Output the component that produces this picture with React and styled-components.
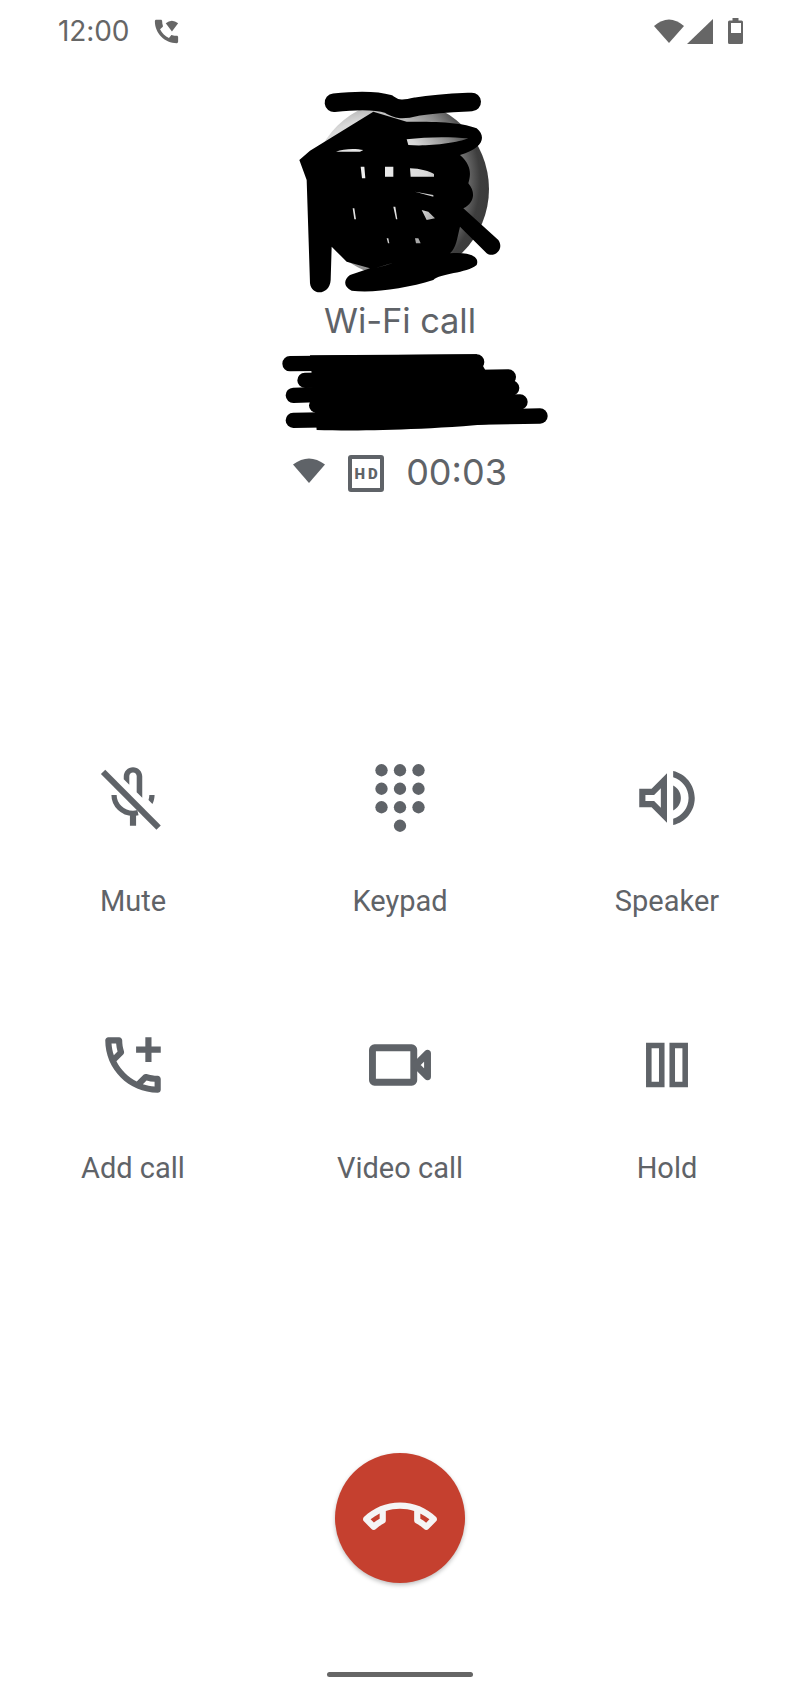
import React from "react";
import styled, { createGlobalStyle } from "styled-components";

const GlobalStyle = createGlobalStyle`
  html, body {
    margin: 0;
    padding: 0;
    background: #ffffff;
  }
`;

const Page = styled.div`
  width: 800px;
  height: 1689px;
  overflow: hidden;
  display: flex;
  flex-direction: column;
  align-items: center;
  background: #ffffff;
  color: #5f6368;
  font-family: "Roboto", "Liberation Sans", sans-serif;
`;

const StatusBar = styled.div`
  width: 100%;
  height: 66px;
  box-sizing: border-box;
  padding: 18px 57px 0 58px;
  display: flex;
  justify-content: space-between;
  align-items: flex-start;
  color: #666666;
`;

const StatusLeft = styled.div`
  display: flex;
  align-items: center;
  height: 26px;
  gap: 22px;
`;

const Clock = styled.span`
  font-family: "Inter", sans-serif;
  font-size: 28px;
  line-height: 30px;
  letter-spacing: -0.1px;
`;

const StatusRight = styled.div`
  display: flex;
  align-items: flex-start;
`;

const StatusIcon = styled.svg`
  display: block;
  flex: none;
  fill: currentColor;
  margin-left: ${(p) => p.$gap || 0}px;
`;

const AvatarWrap = styled.div`
  position: relative;
  width: 300px;
  height: 218px;
  margin-top: 14px;
`;

const AvatarCircle = styled.div`
  width: 178px;
  height: 178px;
  margin: 20px auto 0;
  border-radius: 50%;
  background: radial-gradient(circle at 32% 45%, #f2f2f2 0, #d9d9d9 38%, #8a8a8a 58%, #3e3e3e 72%, #333333 100%);
`;

const Scribble = styled.svg`
  position: absolute;
  top: 0;
  left: 10px;
  display: block;
`;

const CallType = styled.div`
  font-family: "Inter", sans-serif;
  font-size: 34.5px;
  line-height: 46px;
  letter-spacing: -0.1px;
  height: 44px;
`;

const Redaction = styled.svg`
  display: block;
  margin: 10px 0 0 20px;
`;

const TimerRow = styled.div`
  display: flex;
  align-items: center;
  height: 37px;
  margin-top: 23px;
`;

const TimerWifi = styled.svg`
  display: block;
  margin-bottom: 7px;
  fill: #5f6368;
`;

const HdBadge = styled.div`
  width: 36px;
  height: 37px;
  box-sizing: border-box;
  margin: 0 22px 0 23px;
  border: 4px solid #5f6368;
  border-radius: 3px;
  display: flex;
  align-items: center;
  justify-content: center;
  font-size: 15px;
  font-weight: 900;
  letter-spacing: 3px;
  padding-left: 3px;
`;

const Timer = styled.span`
  font-family: "Inter", sans-serif;
  font-size: 36px;
  line-height: 37px;
  margin-bottom: 2px;
`;

const ActionGrid = styled.div`
  width: 801px;
  margin-top: 269px;
  display: grid;
  grid-template-columns: repeat(3, 267px);
  row-gap: 110px;
`;

const ActionCell = styled.div`
  display: flex;
  flex-direction: column;
  align-items: center;
`;

const ActionIcon = styled.svg`
  display: block;
  width: 74px;
  height: 74px;
  fill: #5f6368;
`;

const ActionLabel = styled.div`
  margin-top: 50px;
  font-size: 29px;
  line-height: 33px;
  color: #5f6368;
`;

const HangUp = styled.button`
  width: 130px;
  height: 130px;
  margin-top: 268px;
  padding: 0;
  border: none;
  border-radius: 50%;
  background: #c5402f;
  box-shadow: 0 2px 4px rgba(0, 0, 0, 0.25);
  display: flex;
  align-items: center;
  justify-content: center;
`;

const HangUpIcon = styled.svg`
  display: block;
  width: 74px;
  height: 74px;
  fill: #f5f5f5;
`;

const GestureBar = styled.div`
  width: 146px;
  height: 5px;
  margin-top: 89px;
  border-radius: 3px;
  background: #666666;
`;

const MuteIcon = () => (
  <ActionIcon viewBox="0 0 24 24">
    <path d="M10.8 4.9c0-.66.54-1.2 1.2-1.2s1.2.54 1.2 1.2l-.01 5.2L15 11.9V5c0-1.66-1.34-3-3-3s-3 1.34-3 3v.9l1.8 1.8V4.9z" />
    <path d="M19 11h-1.7c0 .58-.1 1.13-.27 1.64l1.27 1.27c.44-.88.7-1.87.7-2.91z" />
    <path d="M5.85 11c0 3.2 2.75 5.95 6.15 5.95.6 0 1.1-.08 1.6-.2" fill="none" stroke="#5f6368" strokeWidth="1.7" />
    <rect x="11" y="16.6" width="2" height="4.4" />
    <line x1="2.3" y1="3.55" x2="20.3" y2="21.6" stroke="#5f6368" strokeWidth="2" />
  </ActionIcon>
);

const KeypadIcon = () => (
  <ActionIcon viewBox="0 0 24 24">
    {[6, 12, 18].map((x) =>
      [3, 9, 15].map((y) => <circle key={`${x}-${y}`} cx={x} cy={y} r="2" />)
    )}
    <circle cx="12" cy="21" r="2" />
  </ActionIcon>
);

const SpeakerIcon = () => (
  <ActionIcon viewBox="0 0 24 24">
    <path d="M3 9v6h4l5 5V4L7 9H3zm7-.17v6.34L7.83 13H5v-2h2.83L10 8.83zM16.5 12c0-1.77-1.02-3.29-2.5-4.03v8.05c1.48-.73 2.5-2.25 2.5-4.02zM14 3.23v2.06c2.89.86 5 3.54 5 6.71s-2.11 5.85-5 6.71v2.06c4.01-.91 7-4.49 7-8.77 0-4.28-2.99-7.86-7-8.77z" />
  </ActionIcon>
);

const AddCallIcon = () => (
  <ActionIcon viewBox="0 0 24 24">
    <path d="M20 15.5c-1.25 0-2.45-.2-3.57-.57-.1-.03-.21-.05-.31-.05-.26 0-.51.1-.71.29l-2.2 2.2c-2.83-1.45-5.15-3.76-6.59-6.59l2.2-2.21c.28-.26.36-.65.25-1C8.7 6.45 8.5 5.25 8.5 4c0-.55-.45-1-1-1H4c-.55 0-1 .45-1 1 0 9.39 7.61 17 17 17 .55 0 1-.45 1-1v-3.5c0-.55-.45-1-1-1zM5.03 5h1.5c.07.88.22 1.75.46 2.59L5.79 8.8c-.41-1.21-.67-2.48-.76-3.8zM19 18.97c-1.32-.09-2.59-.35-3.8-.75l1.2-1.2c.85.24 1.71.39 2.6.45v1.5zM18 6V3h-2v3h-3v2h3v3h2V8h3V6z" />
  </ActionIcon>
);

const VideoIcon = () => (
  <ActionIcon viewBox="1.25 1.25 21.5 21.5">
    <rect x="4" y="7" width="12" height="10" rx="0.6" fill="none" stroke="#5f6368" strokeWidth="2" />
    <path d="M16.6 12 L20 8.6 V15.4 Z" fill="none" stroke="#5f6368" strokeWidth="2" strokeLinejoin="round" />
  </ActionIcon>
);

const HoldIcon = () => (
  <ActionIcon viewBox="0 0 24 24">
    <path
      fillRule="evenodd"
      d="M5.2 4.8h6v14.4h-6zM7 6.6v10.8h2.4V6.6zM12.8 4.8h6v14.4h-6zM14.6 6.6v10.8H17V6.6z"
    />
  </ActionIcon>
);

const actions = [
  { label: "Mute", icon: <MuteIcon /> },
  { label: "Keypad", icon: <KeypadIcon /> },
  { label: "Speaker", icon: <SpeakerIcon /> },
  { label: "Add call", icon: <AddCallIcon /> },
  { label: "Video call", icon: <VideoIcon /> },
  { label: "Hold", icon: <HoldIcon /> },
];

const App = () => (
  <>
    <GlobalStyle />
    <Page>
      <StatusBar>
        <StatusLeft>
          <Clock>12:00</Clock>
          <StatusIcon width="31" height="31" viewBox="0 0 24 24">
            <path d="M20.01 15.38c-1.23 0-2.42-.2-3.53-.56-.35-.12-.74-.03-1.01.24l-1.57 1.97c-2.83-1.35-5.48-3.9-6.89-6.83l1.95-1.66c.27-.28.35-.67.24-1.02-.37-1.11-.56-2.3-.56-3.53 0-.54-.45-.99-.99-.99H4.19C3.65 3 3 3.24 3 3.99 3 13.28 10.73 21 20.01 21c.71 0 .99-.63.99-1.18v-3.45c0-.54-.45-.99-.99-.99z" />
            <path d="M11.4 5.6Q16.2 1.6 21 5.6L16.2 12Z" />
          </StatusIcon>
        </StatusLeft>
        <StatusRight>
          <StatusIcon width="30" height="26" viewBox="0 0 30 26">
            <path d="M0 8Q15 -5 30 8L15 25Z" />
          </StatusIcon>
          <StatusIcon $gap={3} width="26" height="26" viewBox="0 0 26 26">
            <path d="M0 26L26 1V26Z" />
          </StatusIcon>
          <StatusIcon $gap={15} width="15" height="26" viewBox="0 0 15 26">
            <path
              fillRule="evenodd"
              d="M4.5 0h6v2.5H13.5q1.5 0 1.5 1.5V24.5q0 1.5-1.5 1.5H1.5Q0 26 0 24.5V4q0-1.5 1.5-1.5H4.5zM3 5v10h10V5z"
            />
          </StatusIcon>
        </StatusRight>
      </StatusBar>

      <AvatarWrap>
        <AvatarCircle />
        <Scribble width="300" height="230" viewBox="0 0 900 690">
          <path
            d="M222 68C280 62 340 58 385 72C410 90 430 90 470 80C530 70 590 68 635 66"
            fill="none"
            stroke="#000"
            strokeWidth="56"
            strokeLinecap="round"
          />
          <path
            fillRule="evenodd"
            fill="#000"
            d="M150 212L340 95L440 125C520 125 600 125 650 145C680 170 670 205 600 225C640 260 630 290 625 310C650 340 640 370 610 385L715 480C735 510 700 535 680 520L600 440C590 480 590 500 570 520C630 515 660 530 650 555C620 580 540 580 520 600C440 625 340 640 275 632C250 620 250 600 270 585L330 565L260 545L215 500L212 600C210 645 155 650 150 610L140 300L118 240Z
            M440 178C500 170 570 170 625 175C590 190 500 200 445 195Z
            M228 215C250 205 290 205 310 210L300 215Z
            M302 260L313 260L316 295L306 295Z
            M375 260L400 260L400 290L375 290Z
            M450 265C480 265 510 275 522 282L522 290L452 290Z
            M465 335L520 345L520 350Z
            M278 385L283 385L288 418L283 418Z
            M400 380L406 380L412 418L408 418Z
            M485 390L505 395L525 415L500 420Z
            M380 475L385 475L388 490L384 490Z
            M465 475L475 475L482 490L468 490Z
            M345 565L400 548L380 555Z"
          />
        </Scribble>
      </AvatarWrap>

      <CallType>Wi-Fi call</CallType>

      <Redaction width="300" height="80" viewBox="0 150 900 240">
        <g fill="none" stroke="#000" strokeLinecap="round" strokeWidth="46">
          <path d="M90 185L650 180" />
          <path d="M135 235L745 225" />
          <path d="M100 280L755 258" />
          <path d="M170 310L780 300" />
          <path d="M100 355L840 342" />
        </g>
        <path d="M150 160L650 157L760 360C500 385 300 388 170 384Z" fill="#000" />
      </Redaction>

      <TimerRow>
        <TimerWifi width="32" height="25" viewBox="0 0 32 25">
          <path d="M0 6.5Q16 -5.5 32 6.5L16 25Z" />
        </TimerWifi>
        <HdBadge>HD</HdBadge>
        <Timer>00:03</Timer>
      </TimerRow>

      <ActionGrid>
        {actions.map((action) => (
          <ActionCell key={action.label}>
            {action.icon}
            <ActionLabel>{action.label}</ActionLabel>
          </ActionCell>
        ))}
      </ActionGrid>

      <HangUp aria-label="End call">
        <HangUpIcon viewBox="0 0 24 24">
          <path d="M18.59 10.52c1.05.51 2.04 1.15 2.96 1.91l-1.07 1.07c-.58-.47-1.21-.89-1.88-1.27v-1.71m-13.2 0v1.7c-.65.37-1.28.79-1.87 1.27l-1.07-1.07c.91-.76 1.9-1.4 2.94-1.9M12 7C7.46 7 3.34 8.78.29 11.67c-.18.18-.29.43-.29.71s.11.53.29.71l2.48 2.48c.18.18.43.29.71.29.27 0 .52-.11.7-.28.79-.74 1.69-1.36 2.66-1.85.33-.16.56-.5.56-.9v-3.1C8.85 9.25 10.4 9 12 9s3.15.25 4.59.73v3.1c0 .39.23.74.56.9.98.49 1.87 1.12 2.67 1.85.18.18.43.28.7.28.28 0 .53-.11.71-.29l2.48-2.48c.18-.18.29-.43.29-.71s-.11-.53-.29-.71C20.66 8.78 16.54 7 12 7z" />
        </HangUpIcon>
      </HangUp>

      <GestureBar />
    </Page>
  </>
);

export default App;
